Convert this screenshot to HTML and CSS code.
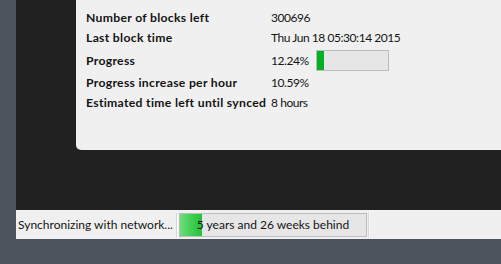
FILE: index.html
```html
<!DOCTYPE html>
<html>
<head>
<meta charset="utf-8">
<link rel="stylesheet" href="styles.css">
</head>
<body>
<div class="window">
  <div class="main">
    <div class="panel">
      <div class="form">
        <div class="label">Number of blocks left</div>
        <div class="value">300696</div>
        <div class="label">Last block time</div>
        <div class="value">Thu Jun 18 05:30:14 2015</div>
        <div class="label">Progress</div>
        <div class="value progress-cell">
          <span class="pct">12.24%</span>
          <div class="bar"><div class="bar-fill" style="width:7px"></div></div>
        </div>
        <div class="label">Progress increase per hour</div>
        <div class="value">10.59%</div>
        <div class="label">Estimated time left until synced</div>
        <div class="value">8 hours</div>
      </div>
    </div>
  </div>
  <div class="statusbar">
    <div class="status-text">Synchronizing with network...</div>
    <div class="sep"></div>
    <div class="sync-bar">
      <div class="sync-fill"></div>
      <span class="sync-label">5 years and 26 weeks behind</span>
    </div>
    <div class="sep"></div>
  </div>
</div>
</body>
</html>
```

FILE: styles.css
```css
html, body {
  margin: 0;
  padding: 0;
}
body {
  background: #4b545c;
  width: 501px;
  height: 264px;
  overflow: hidden;
  font-family: Lato, "Noto Sans", sans-serif;
  font-size: 12px;
  color: #141414;
}
.window {
  margin-left: 16px;
  height: 239px;
  display: flex;
  flex-direction: column;
}
.main {
  flex: 1;
  background: #212121;
  padding-left: 60px;
}
.panel {
  height: 150px;
  background: #f0f0f0;
  border-bottom-left-radius: 5px;
  box-sizing: border-box;
  padding: 10px 0 0 10px;
}
.form {
  display: grid;
  grid-template-columns: 185px auto;
  grid-template-rows: 16px 16px 21px 16px 16px;
  row-gap: 4px;
  line-height: 16px;
}
.label {
  font-weight: bold;
  font-size: 12.2px;
  letter-spacing: 0.3px;
  align-self: center;
  white-space: nowrap;
}
.value {
  align-self: center;
  white-space: nowrap;
  letter-spacing: -0.45px;
}
.progress-cell {
  display: flex;
  align-items: center;
  gap: 7px;
}
.bar {
  width: 71px;
  height: 19px;
  border: 1px solid #bcbcbc;
  background: #e6e6e6;
  display: flex;
}
.bar-fill {
  background: #06b025;
  height: 100%;
}
.statusbar {
  height: 29px;
  background: #f0f0f0;
  display: flex;
  align-items: center;
}
.status-text {
  padding-left: 2px;
  width: 157px;
  white-space: nowrap;
  overflow: hidden;
  line-height: 16px;
  padding-top: 1px;
}
.sep {
  width: 1px;
  height: 24px;
  background: #d5d5d5;
  border-right: 1px solid #fbfbfb;
  margin: 0 1px;
}
.sync-bar {
  position: relative;
  width: 186px;
  height: 22px;
  border: 1px solid #bcbcbc;
  background: #e6e6e6;
  display: flex;
  align-items: center;
  justify-content: center;
}
.sync-fill {
  position: absolute;
  left: 0;
  top: 0;
  bottom: 0;
  width: 22px;
  background: linear-gradient(to right, #6fdc7c, #3ccc4f 60%, #26c03a);
}
.sync-label {
  position: relative;
  line-height: 16px;
}
```
